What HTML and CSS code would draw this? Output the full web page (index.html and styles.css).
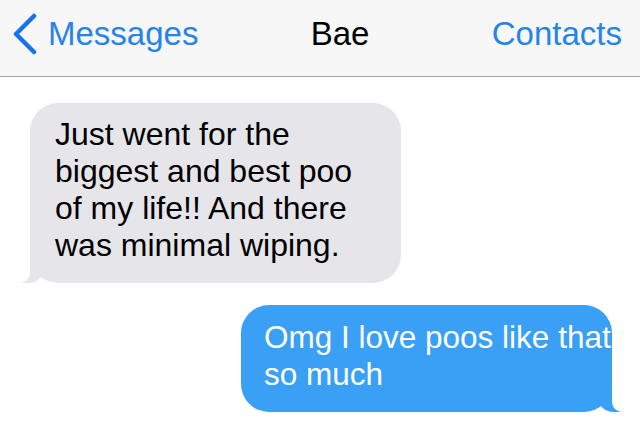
FILE: index.html
```html
<!DOCTYPE html>
<html lang="en">
<head>
  <meta charset="UTF-8">
  <meta name="viewport" content="width=device-width, initial-scale=1.0">
  <title>Bae</title>
  <link rel="stylesheet" href="styles.css">
</head>
<body>

  <div class="nav-bar">
    <a class="nav-back" href="#">
      <svg class="chevron" width="26" height="42" viewBox="0 0 26 42">
        <path d="M22 3 L4 21 L22 39" fill="none" stroke="#1673ef" stroke-width="4.5" stroke-linecap="round" stroke-linejoin="round"/>
      </svg>
      <span>Messages</span>
    </a>
    <div class="nav-title">Bae</div>
    <a class="nav-link" href="#">Contacts</a>
  </div>

  <div class="thread">
    <div class="bubble them">
      Just went for the<br>
      biggest and best poo<br>
      of my life!! And there<br>
      was minimal wiping.
    </div>
    <div class="bubble me">
      Omg I love poos like that<br>
      so much
    </div>
  </div>

</body>
</html>
```

FILE: styles.css
```css
* {
  box-sizing: border-box;
  margin: 0;
  padding: 0;
  font-family: 'Liberation Sans', Arial, sans-serif;
}

body {
  background: #fff;
  width: 640px;
  height: 438px;
  overflow: hidden;
}

/* barre du haut */
.nav-bar {
  height: 77px;
  background: #f7f7f8;
  border-bottom: 1px solid #a6a6a8;
  display: flex;
  align-items: center;
  justify-content: space-between;
  padding: 0 18px 8px 12px;
  font-size: 33px;
}

.nav-back,
.nav-link {
  color: #2583ea;
  text-decoration: none;
}

.nav-back {
  display: flex;
  align-items: center;
  gap: 10px;
}

.nav-title {
  color: #000;
  margin-left: -10px;
}

/* conversation */
.thread {
  display: flex;
  flex-direction: column;
  gap: 22px;
  padding: 26px 28px 0 30px;
}

.bubble {
  position: relative;
  width: 371px;
  font-size: 32px;
  line-height: 37px;
  white-space: nowrap;
  border-radius: 28px;
}

.bubble.them {
  align-self: flex-start;
  background: #e5e5ea;
  color: #000;
  padding: 13px 20px 19px 25px;
}

.bubble.me {
  align-self: flex-end;
  background: #39a0f6;
  color: #fff;
  font-size: 31.5px;
  padding: 14px 4px 19px 23px;
}

/* petites queues */
.bubble.them::before {
  content: "";
  position: absolute;
  left: -8px;
  bottom: 0;
  width: 22px;
  height: 26px;
  background: #e5e5ea;
  border-bottom-right-radius: 16px 14px;
}

.bubble.them::after {
  content: "";
  position: absolute;
  left: -26px;
  bottom: 0;
  width: 26px;
  height: 26px;
  background: #fff;
  border-bottom-right-radius: 10px;
}

.bubble.me::before {
  content: "";
  position: absolute;
  right: -8px;
  bottom: 0;
  width: 22px;
  height: 26px;
  background: #39a0f6;
  border-bottom-left-radius: 16px 14px;
}

.bubble.me::after {
  content: "";
  position: absolute;
  right: -26px;
  bottom: 0;
  width: 26px;
  height: 26px;
  background: #fff;
  border-bottom-left-radius: 10px;
}
```
